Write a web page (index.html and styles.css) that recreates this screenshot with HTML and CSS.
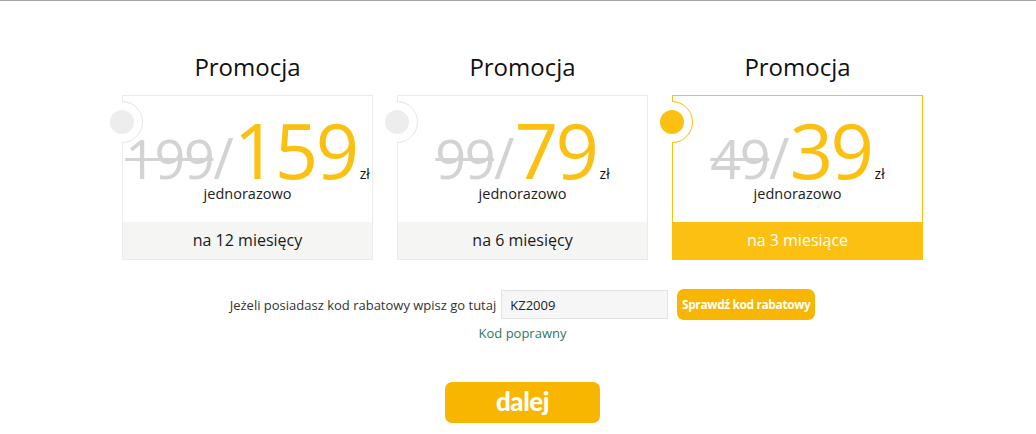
FILE: index.html
```html
<!DOCTYPE html>
<html lang="pl">
  <head>
    <meta charset="utf-8">
    <title>Promocja</title>
    <meta name="viewport" content="width=device-width, initial-scale=1">
    <link rel="stylesheet" href="styles.css">
  </head>
  <body>
    <div class="topline"></div>
    <main class="wrap">
      <section class="plans">
        <div class="plan">
          <h2 class="plan-title">Promocja</h2>
          <div class="card">
            <span class="dot"></span>
            <div class="price-box">
              <p class="price">
                <span class="old">199</span><span class="slash">/</span><span class="new">159</span><span class="cur">zł</span>
              </p>
              <p class="once">jednorazowo</p>
            </div>
            <div class="period">na 12 miesięcy</div>
          </div>
        </div>
        <div class="plan">
          <h2 class="plan-title">Promocja</h2>
          <div class="card">
            <span class="dot"></span>
            <div class="price-box">
              <p class="price">
                <span class="old">99</span><span class="slash">/</span><span class="new">79</span><span class="cur">zł</span>
              </p>
              <p class="once">jednorazowo</p>
            </div>
            <div class="period">na 6 miesięcy</div>
          </div>
        </div>
        <div class="plan">
          <h2 class="plan-title">Promocja</h2>
          <div class="card selected">
            <span class="dot"></span>
            <div class="price-box">
              <p class="price">
                <span class="old">49</span><span class="slash">/</span><span class="new">39</span><span class="cur">zł</span>
              </p>
              <p class="once">jednorazowo</p>
            </div>
            <div class="period">na 3 miesiące</div>
          </div>
        </div>
      </section>

      <form class="coupon">
        <label for="kod">Jeżeli posiadasz kod rabatowy wpisz go tutaj</label>
        <input type="text" id="kod" value="KZ2009">
        <button type="button" class="check">Sprawdź kod rabatowy</button>
      </form>
      <p class="ok">Kod poprawny</p>

      <button type="button" class="next">dalej</button>
    </main>
  </body>
</html>
```

FILE: styles.css
```css
body {
  margin: 0;
  padding-left: 9px;
  font-family: "Open Sans", sans-serif;
  color: #222;
  background: #fff;
}

.topline {
  height: 1px;
  background: #a3a3a3;
  margin-left: -9px;
}

.wrap {
  display: flex;
  flex-direction: column;
  align-items: center;
  padding-top: 51px;
}

.plans {
  display: flex;
  gap: 24px;
}

.plan {
  width: 251px;
}

.plan-title {
  margin: 0 0 13px;
  font-size: 24px;
  font-weight: 400;
  line-height: 30px;
  text-align: center;
  color: #111;
}

.card {
  position: relative;
  border: 1px solid #ebebeb;
}

.card.selected {
  border-color: #fcc013;
}

.dot {
  position: absolute;
  left: -22px;
  top: 5px;
  width: 42px;
  height: 42px;
  box-sizing: border-box;
  border-radius: 50%;
  background: #fff;
  border: 1px solid transparent;
  border-top-color: #e6e6e6;
  border-right-color: #e6e6e6;
  transform: rotate(45deg);
}

.dot::after {
  content: "";
  position: absolute;
  left: 8px;
  top: 8px;
  width: 24px;
  height: 24px;
  border-radius: 50%;
  background: #ededed;
}

.selected .dot {
  border-top-color: #fcc013;
  border-right-color: #fcc013;
}

.selected .dot::after {
  background: #fcc013;
}

.price-box {
  height: 126px;
  box-sizing: border-box;
  padding-top: 24px;
  text-align: center;
}

.price {
  display: flex;
  justify-content: center;
  align-items: baseline;
  margin: 0;
}

.old {
  font-size: 54px;
  line-height: 40px;
  letter-spacing: -1.5px;
  color: #d3d3d3;
  text-decoration: line-through;
  text-decoration-thickness: 3px;
}

.slash {
  font-size: 56px;
  line-height: 40px;
  color: #d3d3d3;
}

.new {
  font-size: 76px;
  line-height: 60px;
  letter-spacing: -2.5px;
  color: #fcc013;
}

.cur {
  font-size: 14px;
  color: #111;
  margin-left: 3px;
}

.once {
  margin: 2px 0 0;
  font-size: 14.5px;
  line-height: 18px;
  color: #222;
}

.period {
  height: 37px;
  line-height: 37px;
  text-align: center;
  font-size: 16px;
  background: #f5f5f4;
  color: #1a1a1a;
}

.selected .period {
  background: #fcc013;
  color: #fff;
}

.coupon {
  display: flex;
  align-items: center;
  margin: 29px 0 0;
  font-size: 13px;
  color: #333;
}

.coupon input {
  margin-left: 5px;
  width: 167px;
  height: 29px;
  box-sizing: border-box;
  padding: 0 8px;
  border: 1px solid #e2e2e2;
  background: #f6f6f6;
  font-family: "Open Sans", sans-serif;
  font-size: 13px;
  color: #222;
}

.check {
  margin-left: 9px;
  width: 138px;
  height: 31px;
  border: 0;
  border-radius: 7px;
  background: #f8b600;
  color: #fff;
  font-family: "Open Sans", sans-serif;
  font-weight: 700;
  font-size: 12px;
  letter-spacing: -0.4px;
  padding: 0;
}

.ok {
  margin: 4px 0 0;
  font-size: 13px;
  line-height: 18px;
  color: #2b7a62;
}

.next {
  margin-top: 40px;
  width: 155px;
  height: 41px;
  border: 0;
  border-radius: 7px;
  background: #f8b600;
  color: #fff;
  font-family: Lato, sans-serif;
  font-weight: 900;
  font-size: 26px;
  letter-spacing: -0.5px;
  padding: 0 0 3px;
}
```
